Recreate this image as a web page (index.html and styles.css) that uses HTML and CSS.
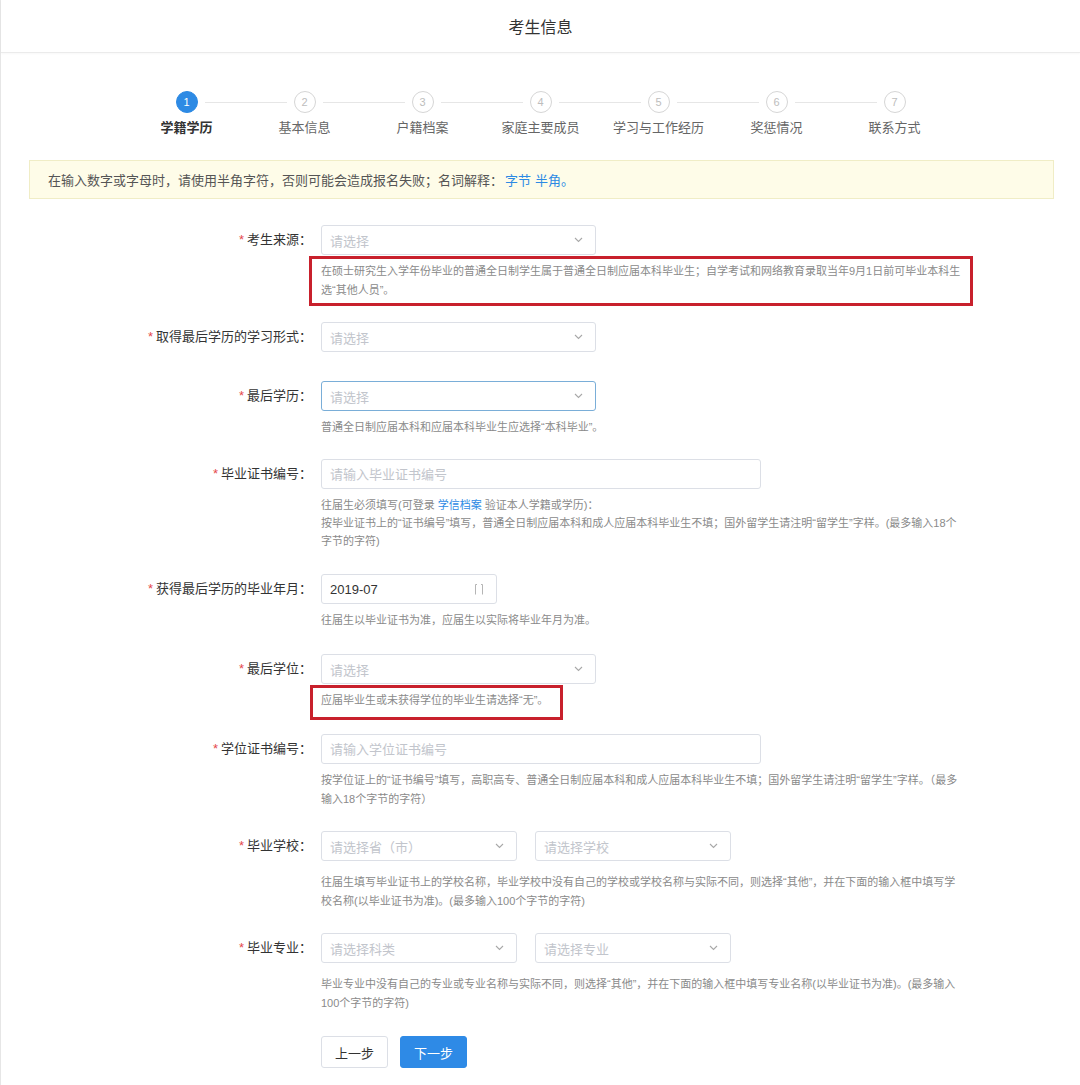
FILE: index.html
```html
<!DOCTYPE html>
<html lang="zh-CN">
<head>
<meta charset="utf-8">
<title>考生信息</title>
<link rel="stylesheet" href="styles.css">
</head>
<body>
<div class="page">
  <header class="header">考生信息</header>

  <ol class="steps">
    <li class="step step--active"><span class="step-circle">1</span><span class="step-label">学籍学历</span></li>
    <li class="step"><span class="step-circle">2</span><span class="step-label">基本信息</span></li>
    <li class="step"><span class="step-circle">3</span><span class="step-label">户籍档案</span></li>
    <li class="step"><span class="step-circle">4</span><span class="step-label">家庭主要成员</span></li>
    <li class="step"><span class="step-circle">5</span><span class="step-label">学习与工作经历</span></li>
    <li class="step"><span class="step-circle">6</span><span class="step-label">奖惩情况</span></li>
    <li class="step"><span class="step-circle">7</span><span class="step-label">联系方式</span></li>
  </ol>

  <div class="notice">在输入数字或字母时，请使用半角字符，否则可能会造成报名失败；名词解释：<a class="link link--gap">字节</a><a class="link link--gap-s">半角</a><span class="link">。</span></div>

  <form class="form">
    <div class="form-item">
      <label class="form-label"><span class="req">*</span>考生来源：</label>
      <div class="form-content">
        <div class="control w-select"><span class="ph">请选择</span><svg class="chev" width="9" height="6" viewBox="0 0 9 6"><path d="M1 1l3.5 3.5L8 1" fill="none" stroke="#a8a8a8" stroke-width="1.1"/></svg></div>
        <div class="help mark-a">在硕士研究生入学年份毕业的普通全日制学生属于普通全日制应届本科毕业生；自学考试和网络教育录取当年9月1日前可毕业本科生选“其他人员”。</div>
      </div>
    </div>

    <div class="form-item form-item--plain">
      <label class="form-label"><span class="req">*</span>取得最后学历的学习形式：</label>
      <div class="form-content">
        <div class="control w-select"><span class="ph">请选择</span><svg class="chev" width="9" height="6" viewBox="0 0 9 6"><path d="M1 1l3.5 3.5L8 1" fill="none" stroke="#a8a8a8" stroke-width="1.1"/></svg></div>
      </div>
    </div>

    <div class="form-item">
      <label class="form-label"><span class="req">*</span>最后学历：</label>
      <div class="form-content">
        <div class="control control--focus w-select"><span class="ph">请选择</span><svg class="chev" width="9" height="6" viewBox="0 0 9 6"><path d="M1 1l3.5 3.5L8 1" fill="none" stroke="#a8a8a8" stroke-width="1.1"/></svg></div>
        <div class="help">普通全日制应届本科和应届本科毕业生应选择“本科毕业”。</div>
      </div>
    </div>

    <div class="form-item form-item--wide">
      <label class="form-label"><span class="req">*</span>毕业证书编号：</label>
      <div class="form-content">
        <input class="control w-input" type="text" placeholder="请输入毕业证书编号">
        <div class="help help--tight">往届生必须填写(可登录 <a class="link">学信档案</a> 验证本人学籍或学历)：<br>按毕业证书上的“证书编号”填写，普通全日制应届本科和成人应届本科毕业生不填；国外留学生请注明“留学生”字样。(最多输入18个字节的字符)</div>
      </div>
    </div>

    <div class="form-item form-item--wide">
      <label class="form-label"><span class="req">*</span>获得最后学历的毕业年月：</label>
      <div class="form-content">
        <div class="control w-date"><span class="val">2019-07</span><svg class="cal" width="10" height="13" viewBox="0 0 10 13"><path d="M1.5 1.5v10M8.5 1.5v10M1.5 1.5h1.5M7 1.5h1.5" fill="none" stroke="#b5b5b5" stroke-width="1"/></svg></div>
        <div class="help">往届生以毕业证书为准，应届生以实际将毕业年月为准。</div>
      </div>
    </div>

    <div class="form-item form-item--wide">
      <label class="form-label"><span class="req">*</span>最后学位：</label>
      <div class="form-content">
        <div class="control w-select"><span class="ph">请选择</span><svg class="chev" width="9" height="6" viewBox="0 0 9 6"><path d="M1 1l3.5 3.5L8 1" fill="none" stroke="#a8a8a8" stroke-width="1.1"/></svg></div>
        <div class="help mark-b">应届毕业生或未获得学位的毕业生请选择“无”。</div>
      </div>
    </div>

    <div class="form-item">
      <label class="form-label"><span class="req">*</span>学位证书编号：</label>
      <div class="form-content">
        <input class="control w-input" type="text" placeholder="请输入学位证书编号">
        <div class="help">按学位证上的“证书编号”填写，高职高专、普通全日制应届本科和成人应届本科毕业生不填；国外留学生请注明“留学生”字样。（最多输入18个字节的字符）</div>
      </div>
    </div>

    <div class="form-item">
      <label class="form-label"><span class="req">*</span>毕业学校：</label>
      <div class="form-content">
        <div class="pair">
          <div class="control w-half"><span class="ph">请选择省（市）</span><svg class="chev" width="9" height="6" viewBox="0 0 9 6"><path d="M1 1l3.5 3.5L8 1" fill="none" stroke="#a8a8a8" stroke-width="1.1"/></svg></div>
          <div class="control w-half"><span class="ph">请选择学校</span><svg class="chev" width="9" height="6" viewBox="0 0 9 6"><path d="M1 1l3.5 3.5L8 1" fill="none" stroke="#a8a8a8" stroke-width="1.1"/></svg></div>
        </div>
        <div class="help help--loose">往届生填写毕业证书上的学校名称，毕业学校中没有自己的学校或学校名称与实际不同，则选择“其他”，并在下面的输入框中填写学校名称(以毕业证书为准)。(最多输入100个字节的字符)</div>
      </div>
    </div>

    <div class="form-item form-item--last">
      <label class="form-label"><span class="req">*</span>毕业专业：</label>
      <div class="form-content">
        <div class="pair">
          <div class="control w-half"><span class="ph">请选择科类</span><svg class="chev" width="9" height="6" viewBox="0 0 9 6"><path d="M1 1l3.5 3.5L8 1" fill="none" stroke="#a8a8a8" stroke-width="1.1"/></svg></div>
          <div class="control w-half"><span class="ph">请选择专业</span><svg class="chev" width="9" height="6" viewBox="0 0 9 6"><path d="M1 1l3.5 3.5L8 1" fill="none" stroke="#a8a8a8" stroke-width="1.1"/></svg></div>
        </div>
        <div class="help help--loose">毕业专业中没有自己的专业或专业名称与实际不同，则选择“其他”，并在下面的输入框中填写专业名称(以毕业证书为准)。(最多输入100个字节的字符)</div>
      </div>
    </div>

    <div class="actions">
      <button type="button" class="btn">上一步</button>
      <button type="button" class="btn btn--primary">下一步</button>
    </div>
  </form>
</div>
</body>
</html>
```

FILE: styles.css
```css
*, *::before, *::after { box-sizing: border-box; }

body {
  margin: 0;
  background: #fff;
  color: #333;
  font-family: "Liberation Sans", "Noto Sans CJK SC", sans-serif;
}

.page {
  border-left: 1px solid #e6e6e6;
  min-height: 1085px;
}

.header {
  height: 53px;
  border-bottom: 1px solid #ebebeb;
  box-shadow: 0 1px 2px rgba(0, 0, 0, 0.03);
  display: flex;
  align-items: center;
  justify-content: center;
  font-size: 16px;
  color: #333;
}

/* steps */
.steps {
  list-style: none;
  padding: 0;
  margin: 38px auto 0;
  width: 826px;
  display: flex;
}

.step {
  width: 118px;
  position: relative;
  display: flex;
  flex-direction: column;
  align-items: center;
}

.step:not(:last-child)::after {
  content: "";
  position: absolute;
  top: 11px;
  left: calc(50% + 18px);
  width: calc(100% - 36px);
  height: 1px;
  background: #e6e6e6;
}

.step-circle {
  width: 22px;
  height: 22px;
  border-radius: 50%;
  border: 1px solid #d6d6d6;
  background: #fff;
  color: #bdbdbd;
  font-size: 11px;
  display: flex;
  align-items: center;
  justify-content: center;
}

.step--active .step-circle {
  background: #2d8ae4;
  border-color: #2d8ae4;
  color: #fff;
}

.step-label {
  margin-top: 6px;
  font-size: 13px;
  line-height: 18px;
  color: #666;
  white-space: nowrap;
}

.step--active .step-label {
  color: #333;
  font-weight: bold;
}

/* notice */
.notice {
  margin: 23px 26px 0 28px;
  height: 39px;
  padding-left: 18px;
  display: flex;
  align-items: center;
  background: #fefce8;
  border: 1px solid #f0edc6;
  font-size: 13px;
  color: #555;
}

.link { color: #2d8ae4; text-decoration: none; }
.link--gap { margin-left: 2px; }
.link--gap-s { margin-left: 4px; }

/* form */
.form { margin-top: 26px; }

.form-item {
  display: flex;
  margin-bottom: 22px;
}

.form-item--plain { margin-bottom: 29px; }
.form-item--wide { margin-bottom: 24px; }
.form-item--last { margin-bottom: 23px; }

.form-label {
  flex: none;
  width: 311px;
  margin-right: 9px;
  text-align: right;
  font-size: 13px;
  line-height: 30px;
  color: #333;
  white-space: nowrap;
}

.req {
  color: #e5484d;
  margin-right: 3px;
}

.form-content { flex: none; }

.control {
  height: 30px;
  border: 1px solid #dcdfe6;
  border-radius: 3px;
  background: #fff;
  padding: 0 12px 0 8px;
  display: flex;
  align-items: center;
  justify-content: space-between;
  font-family: inherit;
  font-size: 13px;
  color: #333;
  outline: none;
}

input.control::placeholder { color: #c2c5cc; }

.control--focus { border-color: #7aaed8; }

.ph { color: #c2c5cc; }
.val { color: #333; }

.chev { flex: none; }
.cal { flex: none; margin-right: 0; }

.w-select { width: 275px; }
.w-input { width: 440px; }
.w-date { width: 176px; }
.w-half { width: 196px; }

.pair {
  display: flex;
  gap: 18px;
}

.help {
  width: 642px;
  margin-top: 7px;
  font-size: 11px;
  line-height: 19px;
  color: #8a8a8a;
}

.help--loose { margin-top: 12px; }
.help--tight { line-height: 18px; }

/* red annotation frames drawn over the hints */
.mark-a,
.mark-b { position: relative; }

.mark-a::after,
.mark-b::after {
  content: "";
  position: absolute;
  border: 3px solid #c8202c;
}

.mark-a::after {
  left: -12px;
  top: -6px;
  width: 664px;
  height: 50px;
}

.mark-b::after {
  left: -11px;
  top: -6px;
  width: 253px;
  height: 35px;
}

/* buttons */
.actions {
  display: flex;
  gap: 12px;
  padding-left: 320px;
}

.btn {
  width: 67px;
  height: 32px;
  border-radius: 3px;
  border: 1px solid #dcdfe6;
  background: #fff;
  color: #333;
  font-family: inherit;
  font-size: 13px;
  cursor: pointer;
}

.btn--primary {
  background: #2e8ae6;
  border-color: #2e8ae6;
  color: #fff;
}
```
